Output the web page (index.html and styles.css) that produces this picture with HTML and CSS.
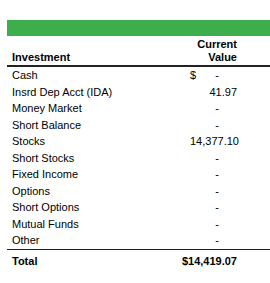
FILE: index.html
```html
<!DOCTYPE html>
<html>
<head>
<meta charset="utf-8">
<link rel="stylesheet" href="styles.css">
</head>
<body>
<div class="sheet">
  <div class="banner"></div>
  <div class="row head">
    <div class="label">Investment</div>
    <div class="value head-value">Current<br>Value</div>
    <div></div>
  </div>
  <div class="row item"><div class="label">Cash</div><div class="value"><span>$</span><span class="dash">-</span></div><div></div></div>
  <div class="row item"><div class="label">Insrd Dep Acct (IDA)</div><div class="value"><span></span><span>41.97</span></div><div></div></div>
  <div class="row item"><div class="label">Money Market</div><div class="value"><span></span><span class="dash">-</span></div><div></div></div>
  <div class="row item"><div class="label">Short Balance</div><div class="value"><span></span><span class="dash">-</span></div><div></div></div>
  <div class="row item"><div class="label">Stocks</div><div class="value"><span></span><span>14,377.10</span></div><div></div></div>
  <div class="row item"><div class="label">Short Stocks</div><div class="value"><span></span><span class="dash">-</span></div><div></div></div>
  <div class="row item"><div class="label">Fixed Income</div><div class="value"><span></span><span class="dash">-</span></div><div></div></div>
  <div class="row item"><div class="label">Options</div><div class="value"><span></span><span class="dash">-</span></div><div></div></div>
  <div class="row item"><div class="label">Short Options</div><div class="value"><span></span><span class="dash">-</span></div><div></div></div>
  <div class="row item"><div class="label">Mutual Funds</div><div class="value"><span></span><span class="dash">-</span></div><div></div></div>
  <div class="row item"><div class="label">Other</div><div class="value"><span></span><span class="dash">-</span></div><div></div></div>
  <div class="row total"><div class="label">Total</div><div class="value total-value">$14,419.07</div><div></div></div>
</div>
</body>
</html>
```

FILE: styles.css
```css
html, body {
  margin: 0;
  padding: 0;
  background: #ffffff;
}
body {
  font-family: "Liberation Sans", Arial, sans-serif;
  font-size: 11px;
  color: #000000;
}
.sheet {
  margin-left: 7px;
  padding-top: 20px;
}
.banner {
  height: 16px;
  background: #3dae4b;
}
.row {
  display: grid;
  grid-template-columns: 178px 56px 1fr;
}
.label {
  padding-left: 5px;
  white-space: nowrap;
}
.value {
  display: flex;
  justify-content: space-between;
  padding-left: 5px;
  padding-right: 4px;
  white-space: nowrap;
}
.head {
  font-weight: bold;
  line-height: 13px;
  padding-top: 2px;
  padding-bottom: 1px;
  border-bottom: 2px solid #222222;
}
.head .label {
  align-self: end;
}
.head-value {
  display: block;
  text-align: right;
}
.item {
  line-height: 16.5px;
}
.dash {
  padding-right: 18px;
}
.total {
  font-weight: bold;
  border-top: 1.5px solid #222222;
  line-height: 20px;
  padding-top: 1px;
}
.total-value {
  justify-content: flex-end;
}
```
